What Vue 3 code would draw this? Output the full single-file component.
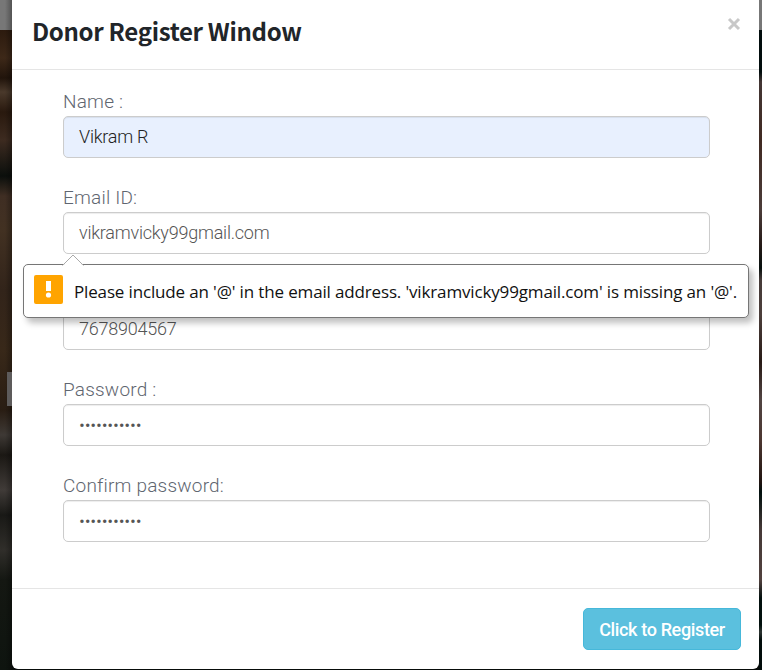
<script setup>
import { ref } from 'vue'

const fields = ref([
  { id: 'name', label: 'Name :', value: 'Vikram R', filled: true },
  { id: 'email', label: 'Email ID:', value: 'vikramvicky99gmail.com', invalid: true },
  { id: 'phone', label: '', value: '7678904567' },
  { id: 'password', label: 'Password :', value: '•••••••••••', secret: true },
  { id: 'confirm', label: 'Confirm password:', value: '•••••••••••', secret: true },
])
</script>

<template>
  <div class="page">
    <div class="heading-edge"></div>
    <section class="modal" role="dialog">
      <header class="head">
        <h4 class="title">Donor Register Window</h4>
        <button class="close" aria-label="Close">
          <svg width="14" height="14" viewBox="0 0 14 14">
            <path d="M2 2L12 12M12 2L2 12" />
          </svg>
        </button>
      </header>
      <form class="body" @submit.prevent>
        <div v-for="f in fields" :key="f.id" class="group">
          <div class="label">{{ f.label }}</div>
          <div class="control" :class="{ filled: f.filled }">
            <span :class="{ secret: f.secret }">{{ f.value }}</span>
          </div>
          <div v-if="f.invalid" class="bubble">
            <svg class="arrow" width="22" height="12" viewBox="0 0 22 12">
              <path class="arrow-fill" d="M0.5 12L11 1L21.5 12Z" />
              <path class="arrow-line" d="M0.5 11.5L11 1L21.5 11.5" />
            </svg>
            <svg class="warn" width="29" height="29" viewBox="0 0 29 29">
              <rect width="29" height="29" rx="2" fill="#ffa400" />
              <path d="M12 6h5v10h-5z" fill="#fff" />
              <circle cx="14.5" cy="20" r="2.6" fill="#fff" />
            </svg>
            <span class="message">Please include an '@' in the email address. 'vikramvicky99gmail.com' is missing an '@'.</span>
          </div>
        </div>
      </form>
      <footer class="foot">
        <button class="register">Click to Register</button>
      </footer>
    </section>
  </div>
</template>

<style>
body {
  margin: 0;
  overflow: hidden;
}
</style>

<style scoped>
.page {
  position: relative;
  box-sizing: border-box;
  width: 762px;
  height: 670px;
  padding: 0 3px 1px 12px;
  overflow: hidden;
  font-family: Roboto, sans-serif;
  background:
    linear-gradient(90deg, transparent 5px, rgba(0, 0, 0, 0.3) 12px) 0 0 / 12px 670px no-repeat,
    linear-gradient(#777, #777) 0 0 / 762px 30px no-repeat,
    linear-gradient(180deg, #2c1a0e 30px, #3d2818 58px, #21140b 78px, #4a392b 92px, #29190e 112px, #3d2b20 140px, #0b0f0c 176px, #3f2e23 196px, #423122 230px, #32241a 290px, #382819 350px, #291d13 410px, #3e3935 435px, #1b1814 455px, #403b38 490px, #191916 515px, #302e2a 550px, #141712 580px, #0e140f 670px) 0 0 / 12px 670px no-repeat,
    linear-gradient(180deg, #020d0d 30px, #020d0d 72px, #433634 82px, #402a22 140px, #4b3c39 210px, #251a17 245px, #08100e 268px, #463b39 280px, #4c3e3b 315px, #281b16 362px, #514442 400px, #4c3731 440px, #201410 482px, #02100e 492px, #453937 530px, #51413e 580px, #03100e 598px, #02100d 625px, #2c3431 632px, #020d0b 640px, #020b0a 670px) 759px 0 / 3px 670px no-repeat,
    #080c0a;
}
.heading-edge {
  position: absolute;
  left: 7px;
  top: 372px;
  width: 5px;
  height: 34px;
  background: #5d5b5b;
}
.modal {
  position: relative;
  box-sizing: border-box;
  display: flex;
  flex-direction: column;
  height: 669px;
  background: #fff;
  border-radius: 0 0 6px 6px;
}
.head {
  box-sizing: border-box;
  display: flex;
  justify-content: space-between;
  height: 70px;
  padding: 0 18px 0 20px;
  border-bottom: 1px solid #e5e5e5;
}
.title {
  margin: 13px 0 0;
  font: 700 24px/36px "Noto Sans CJK SC", sans-serif;
  letter-spacing: -0.32px;
  color: #212529;
  white-space: nowrap;
}
.close {
  display: flex;
  height: 14px;
  margin: 17px 0 0;
  padding: 0;
  border: 0;
  background: none;
}
.close path {
  stroke: #c8c8c8;
  stroke-width: 3;
  fill: none;
}
.body {
  box-sizing: border-box;
  height: 518px;
  padding: 20px 49px 0 51px;
}
.group {
  position: relative;
  height: 96px;
}
.label {
  height: 26px;
  font-size: 19px;
  font-weight: 300;
  line-height: 24px;
  letter-spacing: 0.2px;
  color: #5f6670;
  white-space: nowrap;
}
.control {
  box-sizing: border-box;
  display: flex;
  align-items: center;
  height: 42px;
  padding: 0 15px;
  border: 1px solid #ccc;
  border-radius: 5px;
  background: #fff;
  box-shadow: inset 0 1px 1px rgba(0, 0, 0, 0.075);
  font-size: 18px;
  font-weight: 300;
  line-height: 24px;
  letter-spacing: -0.23px;
  color: #555;
  white-space: nowrap;
}
.filled {
  background: #e8f0fe;
  color: #222;
}
.secret {
  padding-top: 2px;
  letter-spacing: -0.16px;
}
.bubble {
  position: absolute;
  z-index: 2;
  left: -40px;
  top: 78px;
  box-sizing: border-box;
  display: flex;
  align-items: center;
  gap: 11px;
  width: 726px;
  height: 54px;
  padding: 0 10px 3px;
  border: 1px solid #767676;
  border-radius: 5px;
  background: #fff;
  box-shadow: 4px 5px 6px rgba(0, 0, 0, 0.25);
}
.arrow {
  position: absolute;
  left: 38px;
  top: -11px;
}
.arrow-fill {
  fill: #fff;
}
.arrow-line {
  fill: none;
  stroke: #aaa;
}
.warn {
  flex: none;
}
.message {
  padding-top: 5px;
  font: 400 17px/24px "Open Sans", sans-serif;
  letter-spacing: -0.15px;
  color: #111;
  white-space: nowrap;
}
.foot {
  box-sizing: border-box;
  display: flex;
  justify-content: flex-end;
  height: 81px;
  padding: 19px 18px 0 0;
  border-top: 1px solid #e5e5e5;
}
.register {
  box-sizing: border-box;
  width: 158px;
  height: 42px;
  padding: 2px 0 0;
  border: 1px solid #46b8da;
  border-radius: 5px;
  background: #5bc0de;
  font: 500 18px/24px Roboto, sans-serif;
  letter-spacing: -0.35px;
  color: #fff;
  white-space: nowrap;
}
</style>
